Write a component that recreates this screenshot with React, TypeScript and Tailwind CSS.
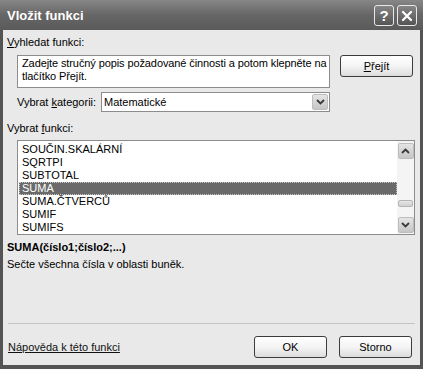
import React from 'react';

const functions = [
  'SOUČIN.SKALÁRNÍ',
  'SQRTPI',
  'SUBTOTAL',
  'SUMA',
  'SUMA.ČTVERCŮ',
  'SUMIF',
  'SUMIFS',
];

function Chevron({ up }: { up?: boolean }) {
  return (
    <svg width="9" height="6" viewBox="0 0 9 6">
      <polyline
        points={up ? '1,5 4.5,1.5 8,5' : '1,1 4.5,4.5 8,1'}
        fill="none"
        stroke="#3a3a3a"
        strokeWidth="1.8"
      />
    </svg>
  );
}

function ScrollButton({ up }: { up?: boolean }) {
  return (
    <div className="w-[16px] h-[16px] rounded-[2px] border border-[#bdbdbd] bg-gradient-to-b from-[#e4e4e4] to-[#c6c6c6] flex items-center justify-center">
      <Chevron up={up} />
    </div>
  );
}

function DialogButton({ children }: { children: React.ReactNode }) {
  return (
    <button className="w-[73px] h-[22px] rounded-[3px] border border-[#3c3c3c] bg-gradient-to-b from-[#ffffff] via-[#f4f4f4] to-[#dcdcdc] text-[11px] leading-[13px] text-black">
      {children}
    </button>
  );
}

function TitleButton({ children }: { children: React.ReactNode }) {
  return (
    <div className="w-[20px] h-[21px] rounded-[3px] border border-[#e8e8e8] bg-gradient-to-b from-[#858585] to-[#555555] flex items-center justify-center text-white font-bold text-[15px]">
      {children}
    </div>
  );
}

export default function App() {
  return (
    <div className="w-[423px] h-[369px] bg-[#545454] flex flex-col overflow-hidden font-['Liberation_Sans',Arial,sans-serif] text-[11px] leading-[13px] text-black">
      {/* Title bar */}
      <div className="h-[30px] shrink-0 flex items-center pl-[7px] pr-[6px] bg-gradient-to-b from-[#878787] via-[#666666] to-[#5a5a5a]">
        <span className="flex-1 text-white font-bold text-[13px] leading-[16px] pt-[1px]">Vložit funkci</span>
        <div className="flex gap-[3px] pt-[1px]">
          <TitleButton>?</TitleButton>
          <TitleButton>
            <svg width="12" height="12" viewBox="0 0 12 12">
              <path d="M2 2 L10 10 M10 2 L2 10" stroke="#fff" strokeWidth="2.2" strokeLinecap="round" />
            </svg>
          </TitleButton>
        </div>
      </div>

      {/* Body */}
      <div className="flex-1 mx-[3px] mb-[4px] bg-[#e9e9e9] flex flex-col">
        <div className="mt-[6px] ml-[4px] h-[13px]">
          <span className="underline">V</span>yhledat funkci:
        </div>

        <div className="mt-[6px] ml-[14px] flex items-start">
          <div className="w-[313px] h-[33px] bg-white border border-[#8c8c8c] pl-[4px] pt-[1px] leading-[13px] whitespace-nowrap overflow-hidden tracking-[-0.1px]">
            <div>Zadejte stručný popis požadované činnosti a potom klepněte na</div>
            <div>tlačítko Přejít.</div>
          </div>
          <div className="ml-[10px]">
            <DialogButton>
              <span className="underline">P</span>řejít
            </DialogButton>
          </div>
        </div>

        <div className="mt-[4px] ml-[14px] flex items-center h-[20px]">
          <div className="w-[84px]">
            Vybrat <span className="underline">k</span>ategorii:
          </div>
          <div className="w-[229px] h-[20px] bg-white border border-[#8c8c8c] flex items-center pl-[2px] pr-[1px]">
            <span className="flex-1">Matematické</span>
            <ScrollButton />
          </div>
        </div>

        <div className="mt-[10px] ml-[4px] h-[13px]">
          Vybrat <span className="underline">f</span>unkci:
        </div>

        <div className="mt-[5px] ml-[14px] w-[398px] h-[95px] bg-white border border-[#8c8c8c] flex overflow-hidden">
          <div className="flex-1 pt-[2px] pl-[1px]">
            {functions.map((f) => (
              <div
                key={f}
                className={
                  f === 'SUMA'
                    ? 'h-[13px] pl-[2px] bg-[#6a6a6a] text-white border border-dotted border-[#c8c8c8] leading-[11px]'
                    : 'h-[13px] pl-[3px]'
                }
              >
                {f}
              </div>
            ))}
          </div>
          <div className="w-[17px] bg-[#f4f4f4] flex flex-col items-center pt-[2px] pb-[1px]">
            <ScrollButton up />
            <div className="flex-1 w-full relative">
              <div className="absolute left-[1px] right-[1px] top-[41px] h-[7px] rounded-[2px] border border-[#b5b5b5] bg-gradient-to-b from-[#e6e6e6] to-[#cfcfcf]" />
            </div>
            <ScrollButton />
          </div>
        </div>

        <div className="mt-[6px] ml-[4px] h-[13px] font-bold">SUMA(číslo1;číslo2;...)</div>
        <div className="mt-[4px] ml-[4px] h-[13px]">Sečte všechna čísla v oblasti buněk.</div>

        <div className="mt-auto">
          <div className="mx-[5px] h-px bg-[#c4c4c4]" />
          <div className="mt-[12px] mb-[7px] h-[22px] flex items-center pl-[5px] pr-[8px]">
            <span className="flex-1 underline text-[#111]">Nápověda k této funkci</span>
            <div className="flex gap-[12px]">
              <DialogButton>OK</DialogButton>
              <DialogButton>Storno</DialogButton>
            </div>
          </div>
        </div>
      </div>
    </div>
  );
}
